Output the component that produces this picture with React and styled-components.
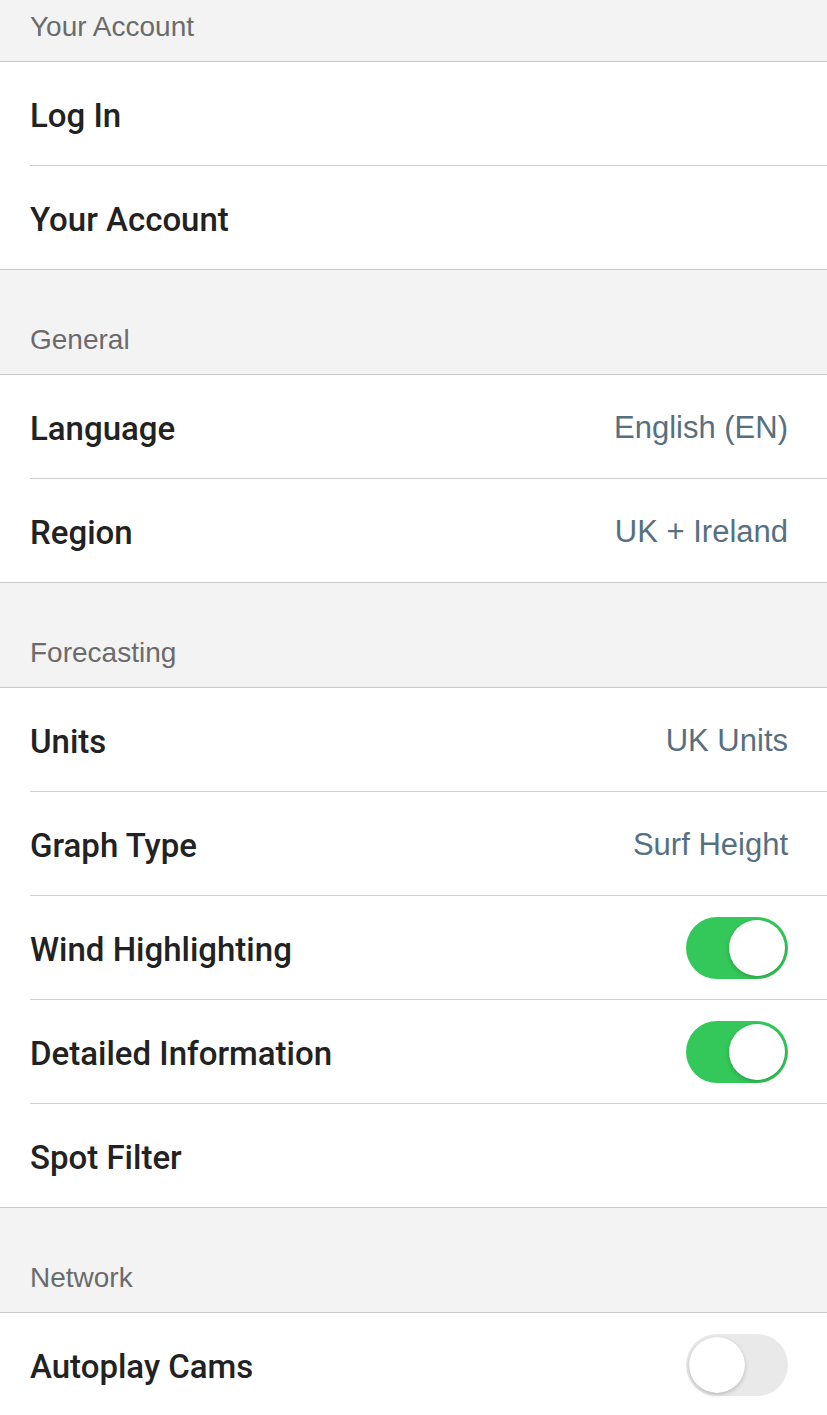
import React from 'react'
import styled, { createGlobalStyle } from 'styled-components'

const GlobalStyle = createGlobalStyle`
  body {
    margin: 0;
    background: #f3f3f3;
    font-family: "Liberation Sans", Arial, sans-serif;
    -webkit-font-smoothing: antialiased;
  }
`;

const sections = [
  {
    title: 'Your Account',
    first: true,
    rows: [{ label: 'Log In' }, { label: 'Your Account' }],
  },
  {
    title: 'General',
    rows: [
      { label: 'Language', value: 'English (EN)' },
      { label: 'Region', value: 'UK + Ireland' },
    ],
  },
  {
    title: 'Forecasting',
    rows: [
      { label: 'Units', value: 'UK Units' },
      { label: 'Graph Type', value: 'Surf Height' },
      { label: 'Wind Highlighting', toggle: true, on: true },
      { label: 'Detailed Information', toggle: true, on: true },
      { label: 'Spot Filter' },
    ],
  },
  {
    title: 'Network',
    rows: [{ label: 'Autoplay Cams', toggle: true, on: false }],
  },
];

const App = () => {
  return (
    <Page>
      <GlobalStyle />
      {sections.map((section) => (
        <Section key={section.title}>
          <Header first={section.first}>{section.title}</Header>
          <List>
            {section.rows.map((row) => (
              <Row key={row.label}>
                <Label>{row.label}</Label>
                {row.value && <Value>{row.value}</Value>}
                {row.toggle && (
                  <Switch on={row.on}>
                    <Knob on={row.on} />
                  </Switch>
                )}
              </Row>
            ))}
          </List>
        </Section>
      ))}
    </Page>
  )
}

const Page = styled.div`
  width: 827px;
  height: 1415px;
  overflow: hidden;
  background: #f3f3f3;
`;

const Section = styled.section`
  display: flex;
  flex-direction: column;
`;

const Header = styled.div`
  height: ${props => props.first ? '62px' : '105px'};
  box-sizing: border-box;
  display: flex;
  align-items: flex-end;
  padding: 0 30px 20px;
  font-size: 28px;
  line-height: 1;
  color: #6b6b6b;
  background: #f3f3f3;
  border-bottom: 1px solid #c8c8c8;
`;

const List = styled.div`
  background: #fff;
  padding-left: 30px;
  border-bottom: 1px solid #c8c8c8;
`;

const Row = styled.div`
  height: 103px;
  display: flex;
  align-items: center;
  justify-content: space-between;
  padding-right: 39px;
  border-bottom: 1px solid #cfcfcf;
  &:last-child {
    border-bottom: none;
  }
`;

const Label = styled.span`
  padding-top: 3px;
  font-family: Roboto, "Liberation Sans", Arial, sans-serif;
  font-size: 33px;
  font-weight: 500;
  color: #222;
`;

const Value = styled.span`
  padding-top: 2px;
  font-size: 31px;
  color: #56707f;
`;

const Switch = styled.div`
  width: 102px;
  height: 62px;
  box-sizing: border-box;
  border-radius: 31px;
  background: ${props => props.on ? '#34c759' : '#e9e9ea'};
  position: relative;
`;

const Knob = styled.div`
  position: absolute;
  top: 3px;
  left: ${props => props.on ? '43px' : '3px'};
  width: 56px;
  height: 56px;
  border-radius: 50%;
  background: #fff;
  box-shadow: 0 2px 4px rgba(0, 0, 0, 0.18), 0 0 1px rgba(0, 0, 0, 0.12);
`;

export default App
